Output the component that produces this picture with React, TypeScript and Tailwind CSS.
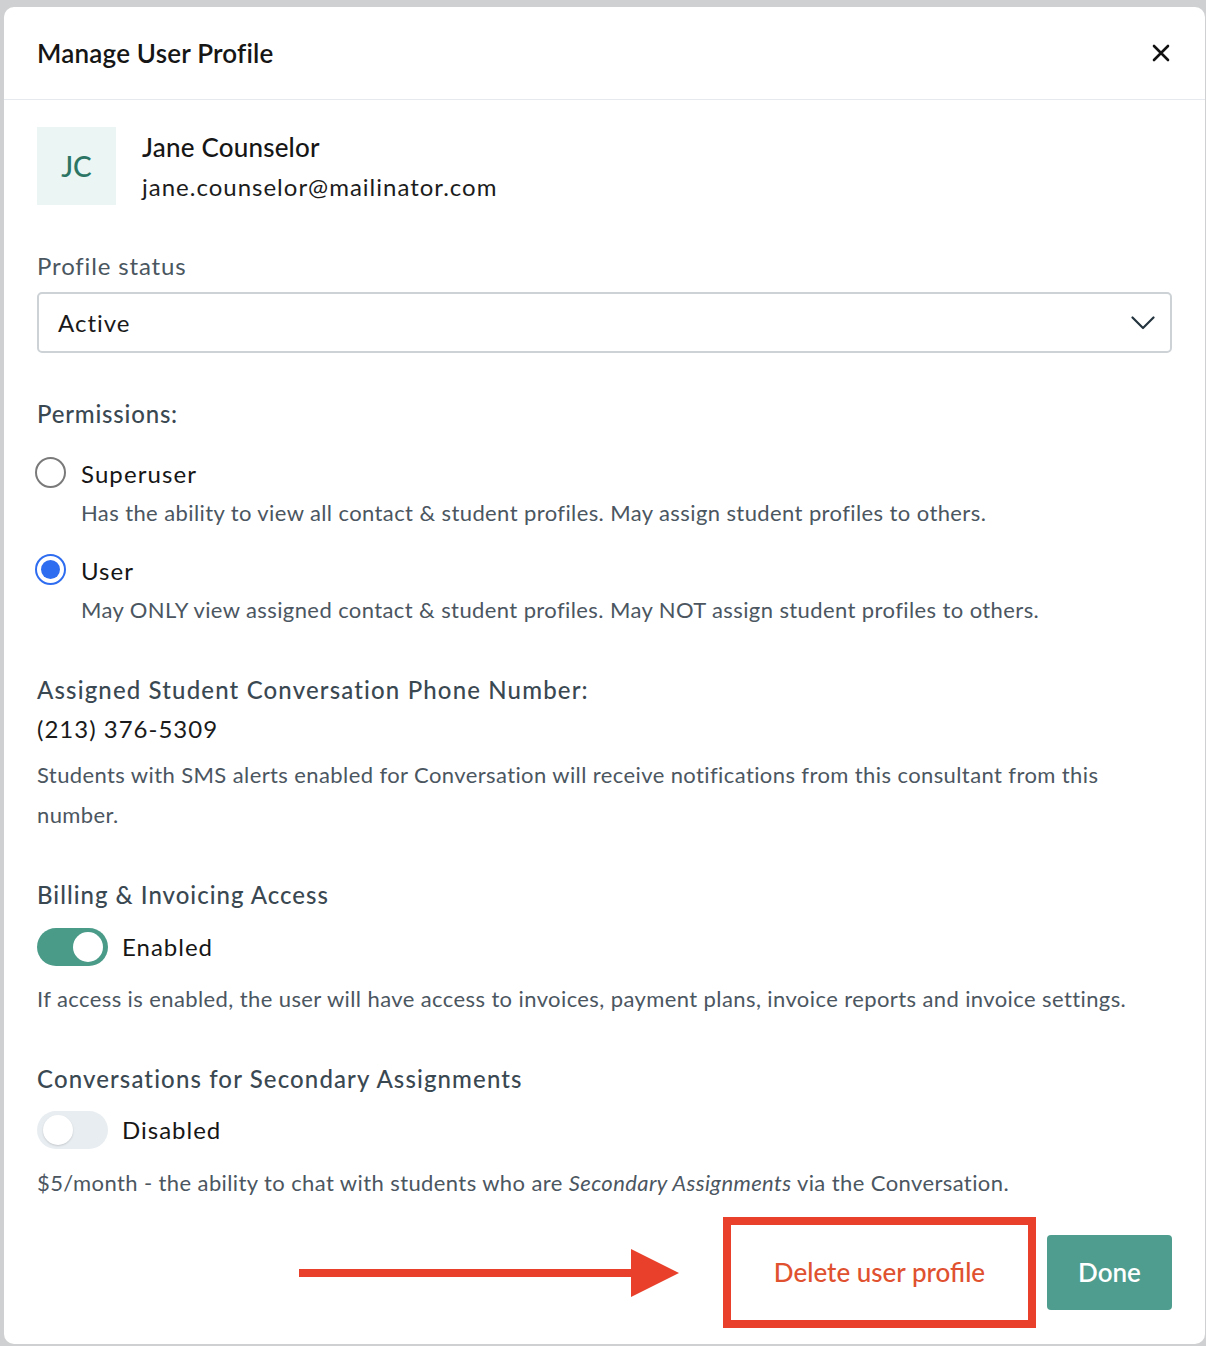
import React from "react";

function Radio({ checked }: { checked: boolean }) {
  return checked ? (
    <div className="w-[31px] h-[31px] rounded-full border-[2px] border-[#2f6df0] flex items-center justify-center shrink-0">
      <div className="w-[19px] h-[19px] rounded-full bg-[#2f6df0]" />
    </div>
  ) : (
    <div className="w-[31px] h-[31px] rounded-full border-[2px] border-[#7a7a7a] bg-white shrink-0" />
  );
}

function Toggle({ on }: { on: boolean }) {
  return on ? (
    <div className="w-[71px] h-[38px] rounded-full bg-[#4b9b89] flex items-center justify-end pr-[5px] shrink-0">
      <div className="w-[30px] h-[30px] rounded-full bg-white" />
    </div>
  ) : (
    <div className="w-[71px] h-[38px] rounded-full bg-[#e8edf1] flex items-center justify-start pl-[6px] shrink-0">
      <div className="w-[30px] h-[30px] rounded-full bg-white shadow-[0_1px_2px_rgba(0,0,0,0.15)]" />
    </div>
  );
}

export default function App() {
  return (
    <div
      className="w-[1206px] h-[1346px] bg-[#cfd0d1] pl-[4px] pt-[7px] pr-[1px] pb-[2px]"
      style={{ fontFamily: "Lato, 'Open Sans', sans-serif" }}
    >
      <div className="w-full h-full bg-white rounded-[10px] flex flex-col">
        <div className="h-[93px] flex items-center justify-between pl-[33px] pr-[34px] border-b border-[#e6eaee]">
          <div className="text-[26px] font-semibold text-[#161616] tracking-[0.2px]">Manage User Profile</div>
          <svg width="18" height="18" viewBox="0 0 18 18" className="mr-[1px]">
            <path d="M2 2 L16 16 M16 2 L2 16" stroke="#111" strokeWidth="2.6" strokeLinecap="round" />
          </svg>
        </div>

        <div className="flex flex-col px-[33px]">
          <div className="flex items-start mt-[27px]">
            <div className="w-[79px] h-[78px] bg-[#eaf5f4] flex items-center justify-center text-[#2c7565] text-[28px] font-medium">
              JC
            </div>
            <div className="ml-[26px] flex flex-col">
              <div className="h-[40px] leading-[40px] text-[26px] font-medium text-[#161616] tracking-[0.2px]">Jane Counselor</div>
              <div className="h-[40px] leading-[40px] text-[24px] text-[#1c1c1c] tracking-[1px]">jane.counselor@mailinator.com</div>
            </div>
          </div>

          <div className="mt-[43px] h-[32px] leading-[32px] text-[24px] text-[#4a5660] tracking-[0.85px]">Profile status</div>
          <div className="mt-[10px] h-[61px] border-[2px] border-[#cdd2d7] rounded-[5px] flex items-center justify-between pl-[19px] pr-[15px]">
            <span className="text-[24px] text-[#1a1a1a] tracking-[1px]">Active</span>
            <svg width="24" height="14" viewBox="0 0 24 14">
              <path d="M1.5 1.5 L12 12 L22.5 1.5" fill="none" stroke="#24343f" strokeWidth="2.2" strokeLinecap="round" strokeLinejoin="round" />
            </svg>
          </div>

          <div className="mt-[45px] h-[32px] leading-[32px] text-[24px] font-medium text-[#3a4852] tracking-[0.8px]">Permissions:</div>

          <div className="mt-[26px] h-[36px] flex items-center">
            <div className="-ml-[2px] mr-[15px] -mt-[4px]"><Radio checked={false} /></div>
            <span className="text-[24px] text-[#161616] tracking-[1.1px]">Superuser</span>
          </div>
          <div className="mt-[5px] pl-[44px] h-[32px] leading-[32px] text-[22px] text-[#4b5661] tracking-[0.4px]">
            Has the ability to view all contact &amp; student profiles. May assign student profiles to others.
          </div>

          <div className="mt-[24px] h-[36px] flex items-center">
            <div className="-ml-[2px] mr-[15px] -mt-[4px]"><Radio checked={true} /></div>
            <span className="text-[24px] text-[#161616] tracking-[1px]">User</span>
          </div>
          <div className="mt-[5px] pl-[44px] h-[32px] leading-[32px] text-[22px] text-[#4b5661] tracking-[0.4px]">
            May ONLY view assigned contact &amp; student profiles. May NOT assign student profiles to others.
          </div>

          <div className="mt-[48px] h-[32px] leading-[32px] text-[24px] font-medium text-[#3a4852] tracking-[1.15px]">
            Assigned Student Conversation Phone Number:
          </div>
          <div className="mt-[5px] h-[36px] leading-[36px] text-[24px] text-[#1a1a1a] tracking-[1px]">(213) 376-5309</div>
          <div className="mt-[8px] leading-[40px] text-[22px] text-[#4b5661] pr-[60px] tracking-[0.4px]">
            Students with SMS alerts enabled for Conversation will receive notifications from this consultant from this number.
          </div>

          <div className="mt-[44px] h-[32px] leading-[32px] text-[24px] font-medium text-[#3a4852] tracking-[1px]">Billing &amp; Invoicing Access</div>
          <div className="mt-[17px] h-[38px] flex items-center">
            <Toggle on={true} />
            <span className="ml-[14px] text-[24px] text-[#161616] tracking-[1px]">Enabled</span>
          </div>
          <div className="mt-[17px] h-[32px] leading-[32px] text-[22px] text-[#4b5661] tracking-[0.4px] whitespace-nowrap">
            If access is enabled, the user will have access to invoices, payment plans, invoice reports and invoice settings.
          </div>

          <div className="mt-[48px] h-[32px] leading-[32px] text-[24px] font-medium text-[#3a4852] tracking-[1.12px]">
            Conversations for Secondary Assignments
          </div>
          <div className="mt-[16px] h-[38px] flex items-center">
            <Toggle on={false} />
            <span className="ml-[14px] text-[24px] text-[#161616] tracking-[1px]">Disabled</span>
          </div>
          <div className="mt-[18px] h-[32px] leading-[32px] text-[22px] text-[#4b5661] tracking-[0.4px] whitespace-nowrap">
            $5/month - the ability to chat with students who are <em>Secondary Assignments</em> via the Conversation.
          </div>

          <div className="mt-[18px] h-[111px] flex items-center justify-end">
            <svg width="380" height="48" viewBox="0 0 380 48" className="mr-[44px]">
              <rect x="0" y="20" width="335" height="8" fill="#e8402a" />
              <polygon points="332,0 380,24 332,48" fill="#e8402a" />
            </svg>
            <div className="w-[313px] h-[111px] border-[8px] border-[#e8402a] flex items-center justify-center">
              <span className="text-[26px] text-[#e0512f] font-medium">Delete user profile</span>
            </div>
            <div className="ml-[11px] w-[125px] h-[75px] rounded-[4px] bg-[#4e9d8f] flex items-center justify-center">
              <span className="text-[26px] text-white font-semibold">Done</span>
            </div>
          </div>
        </div>
      </div>
    </div>
  );
}
